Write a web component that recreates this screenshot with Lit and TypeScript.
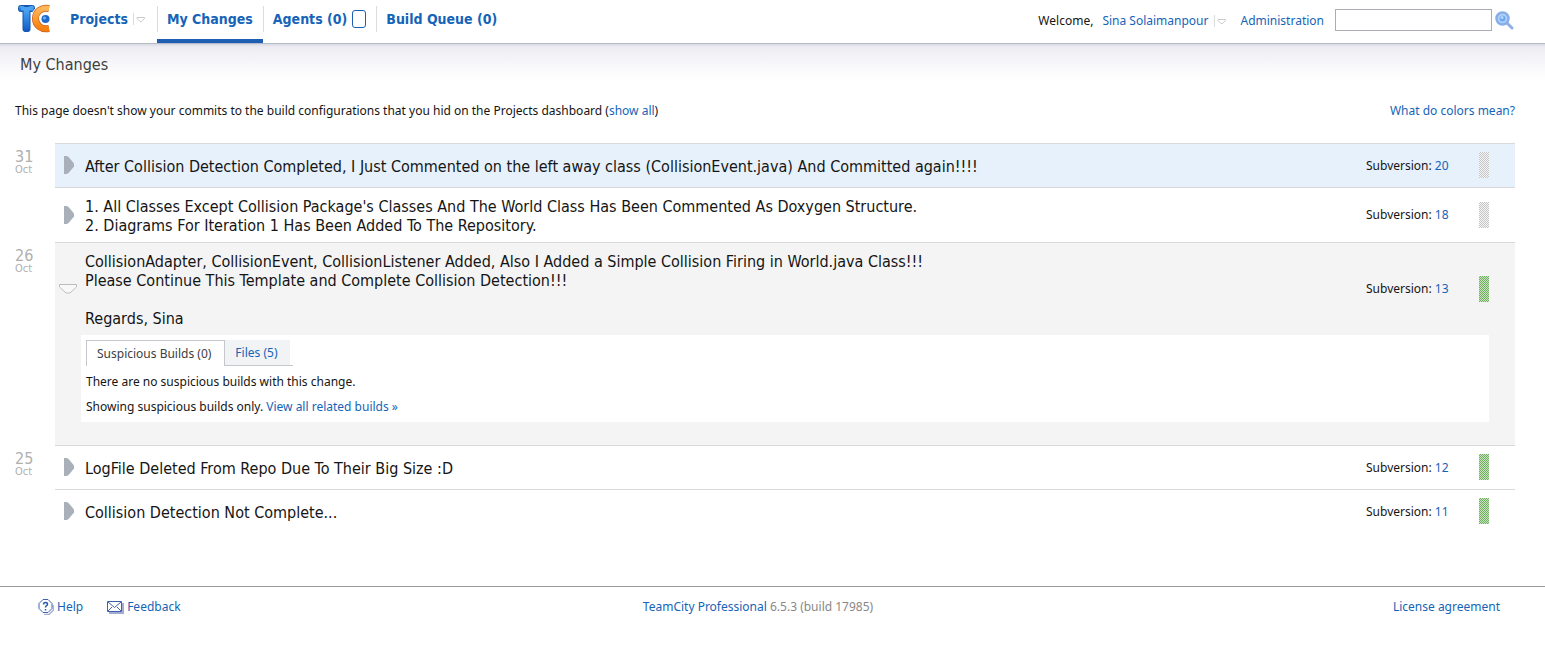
import { LitElement, html, css, nothing, svg } from "lit";
import { customElement, state } from "lit/decorators.js";
import { classMap } from "lit/directives/class-map.js";

interface Change {
  message: string;
  revision: number;
  status: "pending" | "success";
  tone?: "highlight";
}

interface Day {
  day: string;
  month: string;
  changes: Change[];
}

const DAYS: Day[] = [
  {
    day: "31",
    month: "Oct",
    changes: [
      {
        message:
          "After Collision Detection Completed, I Just Commented on the left away class (CollisionEvent.java) And Committed again!!!!",
        revision: 20,
        status: "pending",
        tone: "highlight",
      },
      {
        message:
          "1. All Classes Except Collision Package's Classes And The World Class Has Been Commented As Doxygen Structure.\n2. Diagrams For Iteration 1 Has Been Added To The Repository.",
        revision: 18,
        status: "pending",
      },
    ],
  },
  {
    day: "26",
    month: "Oct",
    changes: [
      {
        message:
          "CollisionAdapter, CollisionEvent, CollisionListener Added, Also I Added a Simple Collision Firing in World.java Class!!!\nPlease Continue This Template and Complete Collision Detection!!!\n\nRegards, Sina",
        revision: 13,
        status: "success",
      },
    ],
  },
  {
    day: "25",
    month: "Oct",
    changes: [
      { message: "LogFile Deleted From Repo Due To Their Big Size :D", revision: 12, status: "success" },
      { message: "Collision Detection Not Complete...", revision: 11, status: "success" },
    ],
  },
];

const menuArrow = svg`<svg width="12" height="12" viewBox="0 0 12 12" aria-hidden="true">
  <path d="M.5 0v12" stroke="#dcdcdc" fill="none"/>
  <path d="M4 4.500h7.500v1L8.500 8.500h-1.500L4 5.500z" stroke="#c9c9c9" fill="#fff"/>
</svg>`;

@customElement("app-root")
export class AppRoot extends LitElement {
  static styles = css`
    :host {
      display: block;
      font-family: "Noto Sans", Tahoma, sans-serif;
      font-size: 12px;
      line-height: 16px;
      color: #151515;
      background: #fff;
    }
    .tabs, .title, .date, .message { font-family: "DejaVu Sans Condensed", Tahoma, sans-serif; }
    a { color: #1564b7; text-decoration: none; }
    a:hover { text-decoration: underline; }
    button {
      font: inherit;
      border: 0;
      padding: 0;
      background: none;
      color: inherit;
      cursor: pointer;
    }
    svg { display: block; flex: none; }
    .top {
      display: flex;
      align-items: stretch;
      height: 43px;
      padding: 0 31px 0 18px;
      border-bottom: 1px solid #b4b9c8;
    }
    .logo { display: block; padding-top: 4px; }
    .tabs { display: flex; margin-left: 10px; font-size: 14px; font-weight: bold; }
    .tab {
      position: relative;
      display: flex;
      align-items: center;
      gap: 5px;
      height: 37px;
      padding: 0 10px 2px;
    }
    .tab:first-child { padding-right: 12px; }
    .tab + .tab::before {
      content: "";
      position: absolute;
      left: 0;
      top: 6px;
      height: 26px;
      border-left: 1px solid #dcdcdc;
    }
    .tab.active { border-bottom: 4px solid #1f5fb2; }
    .count { width: 12px; height: 16px; border: 1px solid #1f5fb2; border-radius: 3px; }
    .user { display: flex; align-items: center; margin-left: auto; height: 42px; }
    .menu { display: flex; align-items: center; gap: 6px; margin: 0 14px 0 9px; }
    .search { display: flex; align-items: center; gap: 3px; margin-left: 11px; padding-bottom: 2px; }
    .search input {
      box-sizing: border-box;
      width: 157px;
      height: 22px;
      border: 1px solid #abadb3;
      padding: 0 4px;
      font: inherit;
      background: #fff;
    }
    .title {
      margin: 0;
      padding: 11px 20px 9px;
      font-size: 16px;
      line-height: 20px;
      font-weight: normal;
      color: #404040;
      background: linear-gradient(#d9dae2, #ececf2 3px, #f6f6fa 18px, #fff 36px);
    }
    main { padding: 0 30px 0 15px; }
    .note { display: flex; justify-content: space-between; padding: 19px 0 24px; }
    .note p { margin: 0; }
    .day { display: grid; grid-template-columns: 40px minmax(0, 1fr); }
    .date { padding-top: 7px; color: #b0b0b0; }
    .date b { display: block; font-size: 16px; line-height: 14px; font-weight: normal; }
    .date small { display: block; font-size: 11px; line-height: 12px; }
    .change { border-top: 1px solid #d9d9d9; }
    .change.highlight { background: #e6f1fc; }
    .change.open { background: #f4f4f4; padding-bottom: 23px; }
    .row {
      display: grid;
      grid-template-columns: 30px minmax(0, 1fr) 113px 10px;
      align-items: center;
      box-sizing: border-box;
      min-height: 43px;
      padding: 7px 26px 7px 0;
    }
    .toggle { justify-self: start; padding: 0 0 1px 4px; }
    .message { margin: 0; padding-top: 2px; font-size: 16px; line-height: 19px; white-space: pre-line; }
    .mark { height: 26px; margin-bottom: 1px; }
    .mark.pending { background: repeating-conic-gradient(#c6c6c6 0 25%, #f4f4f4 0 50%) 0 0 / 2px 2px; }
    .mark.success { background: repeating-conic-gradient(#6cb05c 0 25%, #c9e2c3 0 50%) 0 0 / 2px 2px; }
    .panel { margin: 0 26px; padding: 5px 5px 7px; background: #fff; }
    .panel p { margin: 0; padding-bottom: 9px; }
    .panel p:last-child { padding-bottom: 0; }
    .subtabs { display: flex; margin-bottom: 8px; }
    .subtab { padding: 0 13px 0 10px; height: 26px; color: #1564b7; background: #f2f3f5; border-bottom: 1px solid #c4c8cc; }
    .subtab.active {
      color: #404040;
      background: #fff;
      border: 1px solid #c4c8cc;
      border-bottom: 0;
    }
    .subtabs::after { content: ""; width: 3px; border-bottom: 1px solid #c4c8cc; }
    footer {
      display: grid;
      grid-template-columns: 1fr auto 1fr;
      margin-top: 53px;
      padding: 12px 45px 12px 16px;
      border-top: 1px solid #999;
      color: #888;
    }
    .help { display: flex; gap: 24px; padding-left: 22px; }
    .help a { display: flex; gap: 3px; align-items: center; }
    .license { justify-self: end; }
  `;

  @state() private opened: number | null = 13;
  @state() private tab: "builds" | "files" = "builds";

  private renderPanel() {
    return html`<div class="panel">
      <div class="subtabs" role="tablist">
        <button class=${classMap({ subtab: true, active: this.tab === "builds" })} role="tab"
          aria-selected=${this.tab === "builds"} @click=${() => (this.tab = "builds")}>Suspicious Builds (0)</button>
        <button class=${classMap({ subtab: true, active: this.tab === "files" })} role="tab"
          aria-selected=${this.tab === "files"} @click=${() => (this.tab = "files")}>Files (5)</button>
      </div>
      <p>There are no suspicious builds with this change.</p>
      <p>Showing suspicious builds only. <a href="#builds">View all related builds »</a></p>
    </div>`;
  }

  private renderChange(c: Change) {
    const open = this.opened === c.revision;
    const arrow = open
      ? html`<svg width="18" height="10" viewBox="0 0 18 10"><path d="M.5.5h17v2.500L11 9H7L.5 3z" fill="#f8f8f8" stroke="#bcbcbc"/></svg>`
      : html`<svg width="15" height="18" viewBox="0 0 15 18"><path d="M5 0h3l2 1.500 5 6v3l-5 6L8 18H5z" fill="#a9b0b9"/></svg>`;
    return html`<article class=${classMap({ change: true, open, highlight: c.tone === "highlight" })}>
      <div class="row">
        <button class="toggle" aria-expanded=${open} aria-label="Details of change ${c.revision}"
          @click=${() => (this.opened = open ? null : c.revision)}>${arrow}</button>
        <p class="message">${c.message}</p>
        <span>Subversion: <a href="#r${c.revision}">${c.revision}</a></span>
        <span class="mark ${c.status}"></span>
      </div>
      ${open ? this.renderPanel() : nothing}
    </article>`;
  }

  render() {
    return html`
      <header class="top">
        <a class="logo" href="#home" aria-label="TeamCity">
          <svg width="32" height="29" viewBox="0 0 32 29">
            <defs>
              <linearGradient id="blue" x1="0" y1="0" x2="0" y2="1"><stop offset="0" stop-color="#5aaef5"/><stop offset=".5" stop-color="#2f86e0"/><stop offset="1" stop-color="#1258c0"/></linearGradient>
              <linearGradient id="orange" x1="0" y1="0" x2="0" y2="1"><stop offset="0" stop-color="#ffb65a"/><stop offset="1" stop-color="#f5800f"/></linearGradient>
            </defs>
            <rect x=".5" y="1.500" width="16" height="6" rx="2" fill="url(#blue)" stroke="#1457ae"/>
            <rect x="5" y="2.500" width="7" height="25" rx="2" fill="url(#blue)" stroke="#1457ae"/>
            <path d="M3 3h12v3.500H3z" fill="#4aa2f0"/>
            <path d="M31 4.500C23 3 17.500 8 17.500 14.500S23 26 31 24.500" fill="none" stroke="#fff" stroke-width="8.500"/>
            <path d="M31 4.500C23 3 17.500 8 17.500 14.500S23 26 31 24.500" fill="none" stroke="#c9601a" stroke-width="7"/>
            <path d="M31 4.500C23 3 17.500 8 17.500 14.500S23 26 31 24.500" fill="none" stroke="url(#orange)" stroke-width="5.500"/>
            <circle cx="27.500" cy="15" r="5" fill="#fff"/>
            <circle cx="27.500" cy="15" r="4" fill="#1f68cc"/>
            <circle cx="26.500" cy="14" r="1.500" fill="#74b4f0"/>
          </svg>
        </a>
        <nav class="tabs">
          <div class="tab"><a href="#projects">Projects</a>${menuArrow}</div>
          <div class="tab active"><a href="#changes">My Changes</a></div>
          <div class="tab"><a href="#agents">Agents (0)</a><span class="count"></span></div>
          <div class="tab"><a href="#queue">Build Queue (0)</a></div>
        </nav>
        <div class="user">
          <span>Welcome,</span>
          <div class="menu"><a href="#user">Sina Solaimanpour</a>${menuArrow}</div>
          <a href="#admin">Administration</a>
          <form class="search" role="search" @submit=${(e: Event) => e.preventDefault()}>
            <input type="text" aria-label="Search" />
            <button type="submit" aria-label="Find">
              <svg width="19" height="19" viewBox="0 0 19 19">
                <path d="M12.500 12.500l4.500 4.500" stroke="#8fb0e2" stroke-width="3" stroke-linecap="round"/>
                <circle cx="7.500" cy="7.500" r="6" fill="#b4d3f8" stroke="#85aeea" stroke-width="2.500"/>
                <circle cx="7.500" cy="7.500" r="3" fill="#6ba6f2"/>
                <circle cx="7" cy="6.500" r="1.500" fill="#b9d8fb"/>
              </svg>
            </button>
          </form>
        </div>
      </header>
      <h1 class="title">My Changes</h1>
      <main>
        <div class="note">
          <p>This page doesn't show your commits to the build configurations that you hid on the Projects dashboard (<a href="#all">show all</a>)</p>
          <a href="#colors">What do colors mean?</a>
        </div>
        ${DAYS.map(
          (d) => html`<section class="day">
            <div class="date"><b>${d.day}</b><small>${d.month}</small></div>
            <div>${d.changes.map((c) => this.renderChange(c))}</div>
          </section>`
        )}
      </main>
      <footer>
        <div class="help">
          <a href="#help">
            <svg width="16" height="16" viewBox="0 0 16 16" fill="none">
              <path d="M6 15.500h5l4.500-4.500V6" stroke="#a9b0cc" stroke-width="1.500"/>
              <path d="M5 .5h5l4 4v5l-4 4H5l-4-4v-5z" fill="#fff" stroke="#3f62b0"/>
              <path d="M5.500 5.500q0-2 2-2t2 1.700q0 1-1 1.500T7.500 8.500M7.500 10v1.500" stroke="#2858ae" stroke-width="1.500"/>
            </svg>Help</a>
          <a href="#feedback">
            <svg width="17" height="14" viewBox="0 0 17 14" fill="none">
              <path d="M2 13h14V3" stroke="#a3abd0" stroke-width="2"/>
              <path d="M.5 1.500h14v10H.5z" fill="#fff" stroke="#3f62b0"/>
              <path d="M1 2l6.500 5.500L14 2M1 11l4-4m9 4l-4-4" stroke="#3f62b0"/>
            </svg>Feedback</a>
        </div>
        <span><a href="#teamcity">TeamCity Professional</a> 6.5.3 (build 17985)</span>
        <a class="license" href="#license">License agreement</a>
      </footer>
    `;
  }
}
